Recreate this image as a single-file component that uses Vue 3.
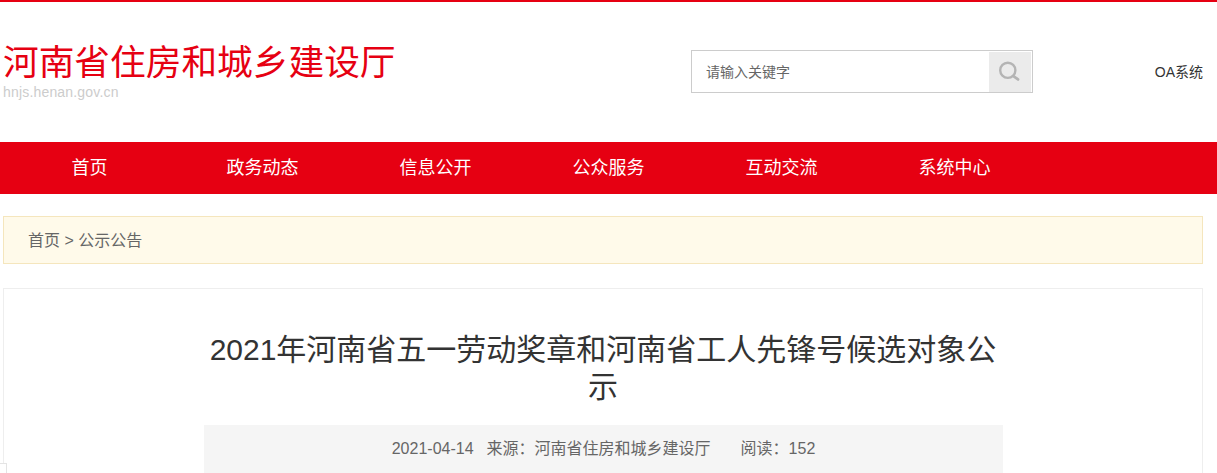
<template>
  <div class="page">
    <header class="header">
      <div class="brand">
        <h1 class="brand-name">河南省住房和城乡建设厅</h1>
        <p class="brand-url">hnjs.henan.gov.cn</p>
      </div>
      <form class="search" @submit.prevent>
        <input class="search-input" type="text" placeholder="请输入关键字" />
        <button class="search-btn" type="submit" aria-label="搜索">
          <svg width="24" height="24" viewBox="0 0 24 24" fill="none" stroke="#b4b4b4">
            <circle cx="9.8" cy="10.3" r="7.6" stroke-width="2.4" />
            <path d="M15.8 16.4l4.2 3" stroke-width="2.8" stroke-linecap="round" />
          </svg>
        </button>
      </form>
      <a class="oa" href="#">OA系统</a>
    </header>

    <nav class="nav">
      <a v-for="item in navItems" :key="item" class="nav-item" href="#">{{ item }}</a>
    </nav>

    <div class="crumb">
      <a href="#">首页</a> &gt; <a href="#">公示公告</a>
    </div>

    <article class="article">
      <h2 class="article-title">2021年河南省五一劳动奖章和河南省工人先锋号候选对象公示</h2>
      <div class="meta">
        <span>2021-04-14</span>
        <span class="meta-source">来源：河南省住房和城乡建设厅</span>
        <span class="meta-read">阅读：152</span>
      </div>
    </article>

    <div class="corner"></div>
  </div>
</template>

<script setup>
const navItems = ['首页', '政务动态', '信息公开', '公众服务', '互动交流', '系统中心']
</script>

<style>
html,
body {
  margin: 0;
  background: #fff;
  overflow: hidden;
}
</style>

<style scoped>
.page {
  position: relative;
  height: 473px;
  overflow: hidden;
  border-top: 2px solid #e60012;
  box-sizing: border-box;
  font-family: "Liberation Sans", "Noto Sans CJK SC", sans-serif;
  color: #333;
}

.header {
  width: 1200px;
  height: 140px;
  margin-left: 3px;
  display: flex;
  align-items: flex-start;
}

.brand {
  width: 688px;
  padding-top: 41px;
}

.brand-name {
  margin: 0;
  font-family: "Liberation Serif", "Noto Sans CJK SC", serif;
  font-size: 35.7px;
  font-weight: 400;
  line-height: 41px;
  color: #e60012;
  white-space: nowrap;
}

.brand-url {
  margin: 0;
  font-size: 14px;
  line-height: 16px;
  letter-spacing: 0.18px;
  color: #ccc;
}

.search {
  width: 342px;
  height: 43px;
  margin-top: 48px;
  box-sizing: border-box;
  border: 1px solid #ccc;
  display: flex;
  align-items: center;
  padding-right: 1px;
}

.search-input {
  flex: 1;
  min-width: 0;
  height: 100%;
  padding: 0 0 0 14px;
  border: 0;
  outline: 0;
  background: transparent;
  font: inherit;
  font-size: 14px;
}

.search-input::placeholder {
  color: #666;
  opacity: 1;
}

.search-btn {
  width: 42px;
  height: 40px;
  padding: 0;
  border: 0;
  background: #ebebeb;
  display: flex;
  align-items: center;
  justify-content: center;
}

.oa {
  margin: 60px 0 0 auto;
  font-size: 14px;
  line-height: 20px;
  color: #333;
  text-decoration: none;
}

.nav {
  height: 52px;
  background: #e60012;
  padding-left: 3px;
  display: flex;
}

.nav-item {
  width: 173px;
  line-height: 52px;
  text-align: center;
  font-size: 18px;
  color: #fff;
  text-decoration: none;
}

.crumb {
  width: 1200px;
  height: 48px;
  margin: 22px 0 24px 3px;
  padding-left: 24px;
  box-sizing: border-box;
  border: 1px solid #f5e6bd;
  background: #fffaea;
  line-height: 47px;
  font-size: 16px;
  color: #666;
}

.crumb a {
  color: #666;
  text-decoration: none;
}

.article {
  width: 1200px;
  height: 300px;
  margin-left: 3px;
  padding: 42px 199px 0 200px;
  box-sizing: border-box;
  border: 1px solid #eee;
}

.article-title {
  margin: 0 1px 20px 0;
  font-size: 30px;
  font-weight: 400;
  line-height: 37px;
  text-align: center;
  color: #333;
}

.meta {
  height: 48px;
  background: #f5f5f5;
  display: flex;
  justify-content: center;
  font-size: 16px;
  line-height: 48px;
  color: #666;
}

.meta-source {
  margin-left: 13px;
}

.meta-read {
  margin-left: 30px;
}

.corner {
  position: absolute;
  left: 0;
  bottom: -2px;
  width: 7px;
  height: 12px;
  box-sizing: border-box;
  border: 1px solid #e4e4e4;
  border-left: 0;
  background: #fff;
}
</style>
